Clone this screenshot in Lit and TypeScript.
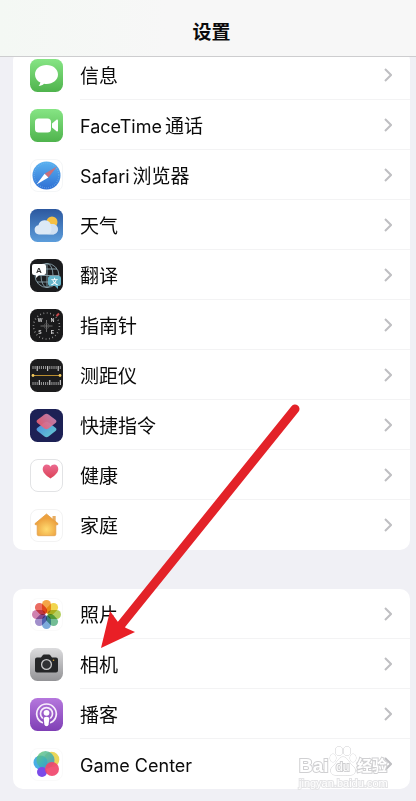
import { LitElement, html, css, svg, nothing, type SVGTemplateResult } from "lit";
import { customElement, property } from "lit/decorators.js";

type Item = { icon: string; latin?: string; label?: string };

const apps: Item[] = [
  { icon: "messages", label: "信息" },
  { icon: "facetime", latin: "FaceTime", label: "通话" },
  { icon: "safari", latin: "Safari", label: "浏览器" },
  { icon: "weather", label: "天气" },
  { icon: "translate", label: "翻译" },
  { icon: "compass", label: "指南针" },
  { icon: "measure", label: "测距仪" },
  { icon: "shortcuts", label: "快捷指令" },
  { icon: "health", label: "健康" },
  { icon: "home", label: "家庭" },
];

const media: Item[] = [
  { icon: "photos", label: "照片" },
  { icon: "camera", label: "相机" },
  { icon: "podcasts", label: "播客" },
  { icon: "gamecenter", latin: "Game Center" },
];

const tile = (fill: string) => svg`<rect width="33" height="33" rx="7.5" fill=${fill}></rect>`;
const paleTile = (line: string) =>
  svg`<rect x=".5" y=".5" width="32" height="32" rx="7.5" fill="#fff" stroke=${line}></rect>`;
const fade = (id: string, top: string, bottom: string) => svg`
  <linearGradient id=${id} x1="0" y1="0" x2="0" y2="1">
    <stop offset="0" stop-color=${top}></stop><stop offset="1" stop-color=${bottom}></stop>
  </linearGradient>`;

const ticks = (y1: number, dir: number) =>
  Array.from({ length: 14 }, (_, i) => {
    const long = i % 5 === (dir > 0 ? 2 : 3);
    return svg`<path d=${`M${3 + i * 2.1} ${y1}v${dir * (long ? 5 : 3)}`} stroke=${long ? "#fff" : "#aaa"} stroke-width=".9"></path>`;
  });

const petals = ["#f39a2d", "#efcf35", "#a9c94a", "#5fb486", "#6b9fd6", "#9480c4", "#c970a4", "#e8574c"];

const icons: Record<string, SVGTemplateResult> = {
  messages: svg`${fade("g", "#86e584", "#4fb34d")}${tile("url(#g)")}
    <path fill="#fff" d="M16.5 6C9.900 6 5 10.100 5 15.500c0 3.600 2.100 6.500 5.400 8.100-.2 1.300-.8 2.400-1.800 3.300 2.200-.1 4.100-.9 5.400-2.200.8.200 1.600.200 2.500.200 6.600 0 11.500-4.100 11.500-9.400S23.100 6 16.500 6z"></path>`,
  facetime: svg`${fade("g", "#86e584", "#4fb34d")}${tile("url(#g)")}
    <rect x="5" y="9.500" width="16" height="14" rx="3.500" fill="#fff"></rect>
    <path fill="#fff" d="M22 14.500l4.500-3.800c.7-.5 1.500-.2 1.500.7v10.200c0 .9-.8 1.200-1.500.7L22 18.500z"></path>`,
  safari: svg`${fade("g", "#59b2f0", "#2f6fd4")}${paleTile("#f4f6f7")}
    <circle cx="16.500" cy="16.500" r="14" fill="url(#g)"></circle>
    <circle cx="16.500" cy="16.500" r="12.300" fill="none" stroke="#7db8ef" stroke-width="1.200" stroke-dasharray=".5 1.600"></circle>
    <path fill="#c8707c" d="M27 7.500L14.600 14.800l3.800 3.600z"></path>
    <path fill="#fff" d="M6.500 25.500l8.100-10.700 3.800 3.600z"></path>`,
  weather: svg`${fade("g", "#2c589f", "#5c9ddb")}${tile("url(#g)")}
    <circle cx="22" cy="13" r="5.500" fill="#f5c044"></circle>
    <path fill="#dce9f6" d="M9 25.500a4.700 4.700 0 0 1-.6-9.300 6.500 6.500 0 0 1 12.200-1.200c3.800-.5 7.400 1.500 7.400 5 0 3.100-2.400 5.500-5.500 5.500z"></path>
    <path fill="#c4d8ee" opacity=".5" d="M20.600 15c3.800-.5 7.400 1.500 7.400 5 0 3.100-2.400 5.500-5.500 5.500h-6c5 0 6-4 4.100-10.500z"></path>`,
  translate: svg`${tile("#1b1c1e")}
    <g fill="none" stroke="#8ba3ad" stroke-width=".9">
      <circle cx="17" cy="16.500" r="12"></circle><ellipse cx="17" cy="16.500" rx="6" ry="12"></ellipse>
      <path d="M17 4.500v24M5 16.500h24M7 10h20M7 23h20"></path></g>
    <path fill="#fff" d="M4 5h10q2 0 2 2v7q0 2-2 2H9l-3 3v-3H4q-2 0-2-2V7q0-2 2-2z"></path>
    <text x="9" y="14" text-anchor="middle" font-family="Liberation Sans, sans-serif" font-weight="700" font-size="8" fill="#333">A</text>
    <path fill="#65b5ca" d="M20 17h9q2 0 2 2v6q0 2-2 2h-1v3l-3-3h-5q-2 0-2-2v-6q0-2 2-2z"></path>
    <text x="24.500" y="25" text-anchor="middle" font-family="Noto Sans CJK SC, sans-serif" font-weight="700" font-size="7" fill="#fff">文</text>`,
  compass: svg`${tile("#1a1a1b")}
    <circle cx="16.500" cy="17" r="13" fill="none" stroke="#a5a5a5" stroke-width="1.600" stroke-dasharray=".7 2.700"></circle>
    <path d="M16.500 11v12M10.500 17h12" stroke="#777" stroke-width=".9"></path>
    <circle cx="16.500" cy="17" r="2.500" fill="none" stroke="#555" stroke-width=".8"></circle>
    <g fill="#ddd" font-family="Liberation Sans, sans-serif" font-weight="700" font-size="5" text-anchor="middle">
      <text x="10" y="12.500">W</text><text x="22.500" y="12.500">N</text>
      <text x="10" y="25">S</text><text x="22.500" y="25">E</text></g>
    <path d="M26.500 7l2.500-2.500" stroke="#c9484b" stroke-width="2"></path>`,
  measure: svg`${tile("#1c1c1d")}${ticks(7, 1)}${ticks(26, -1)}
    <path d="M3 16.500h27" stroke="#b98d2f" stroke-width="1"></path>
    <circle cx="3" cy="16.500" r="1.400" fill="#f3cb61"></circle><circle cx="30" cy="16.500" r="1.400" fill="#f3cb61"></circle>`,
  shortcuts: svg`${tile("#1d2155")}
    <linearGradient id="a" x1="0" y1="0" x2="1" y2="1"><stop offset="0" stop-color="#4a86e0"></stop><stop offset="1" stop-color="#66d0cf"></stop></linearGradient>
    <linearGradient id="b" x1="0" y1=".8" x2="1" y2=".2"><stop offset="0" stop-color="#ee5a6a"></stop><stop offset="1" stop-color="#c888b8"></stop></linearGradient>
    <path fill="url(#a)" d="M14.500 13.500q2-1.300 4 0l7 5.200q1.900 1.600 0 3.200l-7 5.600q-2 1.300-4 0l-7-5.600q-1.900-1.600 0-3.200z"></path>
    <path fill="url(#b)" opacity=".92" d="M14.500 5.500q2-1.300 4 0l7 5.200q1.900 1.600 0 3.200l-7 5.600q-2 1.300-4 0l-7-5.600q-1.900-1.600 0-3.200z"></path>`,
  health: svg`${fade("g", "#eb6b91", "#dc4256")}${paleTile("#e2e3e5")}
    <path fill="url(#g)" d="M20.500 19.500c-4.800-3-7.800-6-7.800-9.400 0-2.700 1.800-4.600 4.100-4.600 1.600 0 2.900.8 3.700 2.200.8-1.400 2.100-2.200 3.700-2.200 2.300 0 4.100 1.900 4.100 4.600 0 3.400-3 6.400-7.800 9.400z"></path>`,
  home: svg`${paleTile("#f3f3f3")}
    <radialGradient id="g" cy=".7"><stop offset="0" stop-color="#ffda70"></stop><stop offset="1" stop-color="#eda23f"></stop></radialGradient>
    <path fill="#e7ad62" d="M22.500 7h3.200v6h-3.200z"></path>
    <path fill="url(#g)" stroke="#e2a04a" stroke-width=".8" stroke-linejoin="round" d="M16.500 5L5 14.600q-.3 1.200 1 1.200h1.200v9.400q0 1.500 1.500 1.500h15.600q1.500 0 1.500-1.500v-9.400H27q1.300 0 1-1.200z"></path>`,
  photos: svg`${paleTile("#fafafa")}
    <g class="petals">${petals.map(
      (c, i) => svg`<rect x="12" y="2" width="9" height="13.500" rx="4.500" fill=${c} opacity=".88" transform=${`rotate(${i * 45} 16.500 16.500)`}></rect>`
    )}</g><circle cx="16.500" cy="16.500" r="1" fill="#fff"></circle>`,
  camera: svg`${fade("g", "#dcdcde", "#939396")}${tile("url(#g)")}
    <path fill="#252628" d="M7 9.500h4l1.700-2.300q.5-.7 1.300-.7h5q.8 0 1.300.7L22 9.500h4q2 0 2 2v11q0 2-2 2H7q-2 0-2-2v-11q0-2 2-2z"></path>
    <circle cx="16.500" cy="16.500" r="4.900" fill="#303134" stroke="#c9c9cb" stroke-width="1.300"></circle>
    <circle cx="23.500" cy="12.300" r=".8" fill="#d8a63c"></circle>`,
  podcasts: svg`${fade("g", "#b577dd", "#7f3fb5")}${tile("url(#g)")}
    <g fill="none" stroke="#f7edfb" stroke-width="1.700" stroke-linecap="round">
      <path d="M12.200 24.600a9.800 9.800 0 1 1 8.600 0"></path><path d="M12.300 19.900a6 6 0 1 1 8.400 0"></path></g>
    <circle cx="16.500" cy="14.800" r="2.900" fill="#fff"></circle>
    <path fill="#fff" d="M13.700 20.500q0-1.800 2.800-1.800t2.800 1.800l-.7 6q-.3 1.800-2.100 1.800t-2.100-1.800z"></path>`,
  gamecenter: svg`${paleTile("#fafafa")}
    <linearGradient id="a" x1="0" y1="0" x2="1" y2="1"><stop offset="0" stop-color="#73cb62"></stop><stop offset=".5" stop-color="#3db1b1"></stop><stop offset="1" stop-color="#3d86d6"></stop></linearGradient>
    <circle cx="21.500" cy="11.500" r="7.800" fill="#ead65a"></circle>
    <circle cx="10.500" cy="14.500" r="7" fill="#48aee5"></circle>
    <circle cx="15.500" cy="12" r="9" fill="url(#a)" opacity=".82"></circle>
    <circle cx="12" cy="24" r="5" fill="#7b4be8"></circle>
    <circle cx="22" cy="21" r="7" fill="#f0466d" opacity=".92"></circle>`,
};

@customElement("app-icon")
export class AppIcon extends LitElement {
  @property() name = "";

  static styles = css`
    :host { display: block; flex: none; width: 33px; height: 33px; }
    .icon { display: block; width: 100%; height: 100%; }
    .petals { isolation: isolate; }
    .petals rect { mix-blend-mode: multiply; }
  `;

  render() {
    return html`<svg class="icon" viewBox="0 0 33 33" aria-hidden="true">${icons[this.name]}</svg>`;
  }
}

@customElement("settings-group")
export class SettingsGroup extends LitElement {
  @property({ attribute: false }) items: Item[] = [];

  static styles = css`
    :host { display: block; }
    .list { margin: 0; padding: 0; list-style: none; background: #fff; border-radius: 10px; }
    .row { display: flex; align-items: center; gap: 17px; height: 50px; padding-left: 17px; color: #0b0b0b; text-decoration: none; }
    .body { display: flex; flex: 1; align-items: center; justify-content: space-between; box-sizing: border-box; height: 50px; padding: 4px 18px 0 0; border-bottom: 1px solid #f3f3f4; }
    .item:last-child .body { border-bottom-color: transparent; }
    .label { display: flex; align-items: baseline; gap: 3px; }
    .latin { font-size: 18px; }
    .chevron { display: block; width: 8px; height: 14px; margin-bottom: 4px; fill: none; stroke: #bfbfc2; stroke-width: 2; }
  `;

  render() {
    return html`<ul class="list">
      ${this.items.map(
        (item) => html`<li class="item">
          <a class="row" href="#${item.icon}">
            <app-icon name=${item.icon}></app-icon>
            <span class="body">
              <span class="label">
                ${item.latin ? html`<span class="latin">${item.latin}</span>` : nothing}
                ${item.label ? html`<span>${item.label}</span>` : nothing}
              </span>
              <svg class="chevron" viewBox="0 0 8 14" aria-hidden="true"><path d="M1 1l6 6-6 6"></path></svg>
            </span>
          </a>
        </li>`
      )}
    </ul>`;
  }
}

@customElement("app-root")
export class AppRoot extends LitElement {
  static styles = css`
    :host { display: block; min-height: 100vh; background: #f0f0f5; font: 19px/24px Inter, "Noto Sans CJK SC", sans-serif; color: #0b0b0b; }
    .header { position: sticky; top: 0; z-index: 2; padding: 21px 6px 11px 13px; background: linear-gradient(90deg, #f4f8f4, #f7f7f7 40%); border-bottom: 1px solid #cdcdcf; text-align: center; }
    .title { margin: 0; font-size: 19px; font-weight: 700; line-height: 24px; }
    .content { position: relative; display: grid; gap: 39px; margin-top: -7px; padding: 0 6px 12px 13px; }
    .last { position: relative; }
    .arrow { position: absolute; top: 353px; left: 95px; width: 210px; height: 250px; pointer-events: none; }
    .mark { position: absolute; right: 19px; bottom: 0; width: 92px; height: 45px; overflow: visible; pointer-events: none; fill: #fff; stroke: #d0d0d2; stroke-width: 1; paint-order: stroke; }
    .brand { font: 700 19px "Liberation Sans", sans-serif; stroke-width: 2; }
    .brand-cn { font: 700 15px "Noto Sans CJK SC", sans-serif; stroke-width: 2; }
    .du { font: 12px "Liberation Sans", sans-serif; stroke-width: 2; }
    .site { font: 11px "Liberation Sans", sans-serif; stroke: #e4e4e6; stroke-width: 2; }
  `;

  render() {
    return html`
      <header class="header"><h1 class="title">设置</h1></header>
      <main class="content">
        <settings-group .items=${apps}></settings-group>
        <div class="last">
          <settings-group .items=${media}></settings-group>
          <svg class="mark" viewBox="0 0 92 45">
            <text class="brand" x="0" y="28">Bai</text>
            <g>
              <ellipse cx="34" cy="14" rx="3" ry="4"></ellipse><ellipse cx="40" cy="7" rx="3.500" ry="4.500"></ellipse>
              <ellipse cx="48" cy="7" rx="3.500" ry="4.500"></ellipse><ellipse cx="54" cy="14" rx="3" ry="4"></ellipse>
              <path d="M44 13c-4 0-5 4-8 7-3 3-5 5-4 8 1 4 6 3 12 3s11 1 12-3c1-3-1-5-4-8-3-3-4-7-8-7z"></path>
            </g>
            <text class="du" x="37" y="27">du</text>
            <text class="brand-cn" x="58" y="27">经验</text>
            <text class="site" x="0" y="43">jingyan.baidu.com</text>
          </svg>
        </div>
        <svg class="arrow" viewBox="0 0 210 250" aria-hidden="true">
          <path d="M200 6L26 222" fill="none" stroke="#e32228" stroke-width="9" stroke-linecap="round"></path>
          <path d="M6 245L15 208 23 219 31 225 40 229z" fill="#e91f26"></path>
        </svg>
      </main>
    `;
  }
}
